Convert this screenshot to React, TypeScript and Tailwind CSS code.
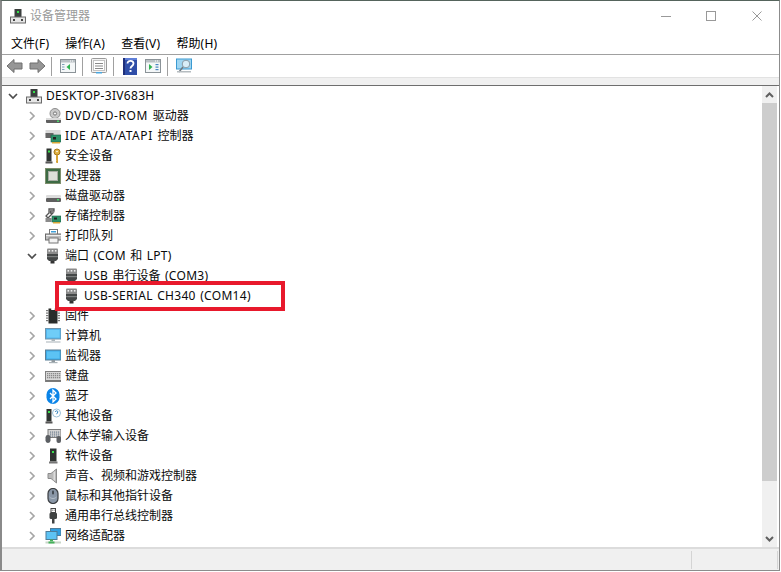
import React from "react";

type IC = React.ReactNode;
const S = ({ children, size = 16 }: { children: IC; size?: number }) => (
  <svg width={size} height={size} viewBox="0 0 16 16" className="shrink-0 block">{children}</svg>
);

const Tower = () => (
  <S>
    <rect x="4.5" y="1" width="7" height="8" fill="#3b3f3e" />
    <rect x="7" y="3" width="2" height="2" fill="#35e04a" />
    <rect x="0.5" y="9" width="15" height="6" fill="#e6e6e6" stroke="#6b6b6b" />
    <rect x="3" y="11" width="2" height="2" fill="#444" />
    <rect x="11" y="11" width="2" height="2" fill="#444" />
  </S>
);
const Dvd = () => (
  <S>
    <circle cx="10" cy="5.5" r="5" fill="#c9c9c9" stroke="#8d8d8d" />
    <circle cx="10" cy="5.5" r="1.6" fill="#f5f5f5" stroke="#777" />
    <rect x="1" y="10" width="15" height="5" rx="1" fill="#5f5f5f" />
    <rect x="1" y="10" width="15" height="2" fill="#dcdcdc" />
    <rect x="12" y="12.5" width="2" height="1.5" fill="#4bd66b" />
  </S>
);
const Ide = () => (
  <S>
    <rect x="0.5" y="2" width="15" height="6" fill="#d9d9d9" />
    <rect x="0.5" y="5" width="8" height="5" fill="#666" />
    <rect x="6" y="7" width="10" height="7" fill="#2b9268" stroke="#1d5f47" strokeWidth="0.6" />
    <rect x="8" y="9" width="3" height="2.5" fill="#222" />
    <rect x="7" y="14" width="8" height="1.5" fill="#d6a83a" />
  </S>
);
const Sec = () => (
  <S>
    <rect x="1.5" y="0.5" width="5" height="13" fill="#2f3331" />
    <rect x="0.5" y="13.5" width="7" height="2" fill="#555" />
    <rect x="3" y="2.5" width="2" height="2" fill="#3ae04f" />
    <circle cx="12" cy="4" r="3" fill="#e0b040" stroke="#a5791e" />
    <circle cx="12" cy="3.5" r="0.8" fill="#fff" />
    <path d="M11 7h2v8h-1.5l-.5-1v-1l.5-.5-.5-.5z" fill="#d6a232" />
  </S>
);
const Cpu = () => (
  <S>
    <rect x="0" y="0" width="16" height="16" fill="#7d8f6c" />
    <rect x="1" y="1" width="14" height="14" fill="#3d6b45" />
    <rect x="3.5" y="3.5" width="9" height="9" fill="#dcdfd9" stroke="#a7aca3" />
  </S>
);
const Disk = () => (
  <S>
    <rect x="1" y="7" width="15" height="3" rx="1" fill="#dcdcdc" />
    <rect x="1" y="10" width="15" height="4" rx="1" fill="#5f5f5f" />
    <rect x="12" y="11" width="2" height="1.5" fill="#4bd66b" />
  </S>
);
const Storage = () => (
  <S>
    <path d="M4 1h5v2H5.5v2H8L3 10 1 8l3-3z" fill="none" stroke="#555" strokeWidth="1.3" />
    <rect x="0.5" y="10" width="6" height="4" fill="#8a8a8a" />
    <rect x="7" y="8" width="9" height="6" fill="#2b9268" stroke="#1d5f47" strokeWidth="0.6" />
    <rect x="9" y="9.5" width="3" height="2" fill="#222" />
    <rect x="8" y="14" width="7" height="1.5" fill="#d6a83a" />
  </S>
);
const Printer = () => (
  <S>
    <rect x="4.5" y="1.5" width="8" height="5" fill="#fff" stroke="#777" />
    <rect x="6" y="3" width="5" height="1.5" fill="#3f9fd8" />
    <rect x="0.5" y="6" width="16" height="6" fill="#bdbdbd" stroke="#6a6a6a" />
    <rect x="4" y="10" width="9" height="5" fill="#f4f4f4" stroke="#777" />
    <rect x="1" y="7" width="15" height="1" fill="#eee" />
  </S>
);
const Port = () => (
  <S>
    <rect x="2" y="0.5" width="11" height="6" rx="1" fill="#8b8b8b" />
    <rect x="3.5" y="2" width="1.6" height="1.6" fill="#eee" />
    <rect x="6.7" y="2" width="1.6" height="1.6" fill="#eee" />
    <rect x="9.900" y="2" width="1.6" height="1.6" fill="#eee" />
    <path d="M2 6h11v5l-2 2H4l-2-2z" fill="#454848" />
    <rect x="2" y="8" width="11" height="1.200" fill="#7d8080" />
    <rect x="5.500" y="13" width="4" height="2.500" fill="#333" />
  </S>
);
const Chip = () => (
  <S>
    <rect x="3.5" y="0.5" width="9" height="15" fill="#2a2c2b" />
    <rect x="6" y="0" width="4" height="2" fill="#fff" rx="1" />
    {[2, 4.5, 7, 9.5, 12].map((y) => (
      <g key={y}>
        <rect x="1" y={y} width="2.5" height="1.2" fill="#777" />
        <rect x="12.5" y={y} width="2.5" height="1.2" fill="#777" />
      </g>
    ))}
  </S>
);
const Pc = () => (
  <S>
    <rect x="0.5" y="0.5" width="15.5" height="10.5" fill="#52b6ee" stroke="#6f95ad" />
    <rect x="2" y="2" width="12.5" height="7.5" fill="#6fcdf8" />
    <rect x="6.5" y="11" width="3.5" height="2" fill="#aab4ba" />
    <rect x="1" y="13" width="14.5" height="2" fill="#d3d8db" />
  </S>
);
const Monitor = () => (
  <S>
    <rect x="0.5" y="2" width="15.5" height="10" fill="#3dabe8" stroke="#5b7f96" />
    <rect x="2" y="3.5" width="12.5" height="7" fill="#5cc3f4" />
    <rect x="6.5" y="12" width="3.5" height="2" fill="#8e989e" />
    <rect x="4" y="14" width="8.5" height="1.2" fill="#a9b2b7" />
  </S>
);
const Keyboard = () => (
  <S>
    <rect x="0.5" y="3.5" width="16" height="10" fill="#d8d8d8" stroke="#808080" />
    {[5, 7, 9].map((y) => (
      <g key={y}>
        {[2, 4, 6, 8, 10, 12, 14].map((x) => (
          <rect key={x} x={x} y={y} width="1.3" height="1.3" fill="#8a8a8a" />
        ))}
      </g>
    ))}
    <rect x="1" y="12" width="15" height="1.5" fill="#777" />
  </S>
);
const Bt = () => (
  <S>
    <rect x="1.5" y="0" width="13" height="16" rx="6.5" fill="#0a84e8" />
    <path d="M5 5l6 6-3 3V2l3 3-6 6" fill="none" stroke="#fff" strokeWidth="1.3" />
  </S>
);
const Other = () => (
  <S>
    <rect x="1.5" y="1" width="5" height="12.5" fill="#2f3331" />
    <rect x="0.5" y="13.5" width="7" height="2" fill="#555" />
    <rect x="3" y="3" width="2" height="2" fill="#3ae04f" />
    <circle cx="11.5" cy="5" r="4" fill="#fff" stroke="#9cc0d8" />
    <path d="M10.2 4c.3-1.600 2.800-1.400 2.700 0 0 1-1.300 1-1.300 2.200" fill="none" stroke="#2b7fbd" strokeWidth="1" />
  </S>
);
const Hid = () => (
  <S>
    <rect x="3" y="1.500" width="13" height="8" fill="#d5d5d5" stroke="#7b7b7b" />
    {[3.500, 5.500, 7.500].map((y) => (
      <g key={y}>
        {[5, 7, 9, 11, 13].map((x) => (
          <rect key={x} x={x} y={y} width="1.200" height="1.200" fill="#6f7f90" />
        ))}
      </g>
    ))}
    <rect x="0.500" y="7" width="5" height="8" rx="2.400" fill="#5c5f63" />
    <rect x="11.500" y="8" width="4.500" height="7" rx="2" fill="#5c5f63" />
  </S>
);
const Soft = () => (
  <S>
    <rect x="5" y="0.500" width="6.500" height="13" fill="#2f3331" />
    <rect x="4" y="13.500" width="8.500" height="2" fill="#777" />
    <rect x="7" y="3" width="2" height="2" fill="#3ae04f" />
  </S>
);
const Sound = () => (
  <S>
    <path d="M3 5.500h3L11.500 1v14L6 10.500H3z" fill="#b9b9b9" stroke="#8b8b8b" />
    <rect x="8.500" y="3.500" width="1.500" height="9" fill="#dcdcdc" />
  </S>
);
const Mouse = () => (
  <S>
    <rect x="3" y="0.500" width="10" height="15" rx="5" fill="#8a97a7" stroke="#3a3d40" strokeWidth="1.200" />
    <rect x="7" y="2.500" width="2" height="4" rx="1" fill="#444b52" />
    <path d="M4.500 9c2 2 5 2 7 0" stroke="#b7c2cc" fill="none" />
  </S>
);
const Usb = () => (
  <S>
    <rect x="6" y="0.500" width="4.500" height="4" fill="#fff" stroke="#444" />
    <rect x="7.200" y="1.700" width="0.900" height="0.900" fill="#444" />
    <rect x="8.700" y="1.700" width="0.900" height="0.900" fill="#444" />
    <rect x="4.500" y="4.500" width="7.500" height="6.500" rx="1.500" fill="#3f4242" />
    <rect x="7" y="11" width="2.500" height="4.500" fill="#3f4242" />
  </S>
);
const Net = () => (
  <S>
    <rect x="5.500" y="0.500" width="10.500" height="7" fill="#2f9ee0" stroke="#4d7c99" />
    <rect x="1" y="3.500" width="11" height="8" fill="#5cc3f4" stroke="#4d7c99" />
    <rect x="5" y="11.500" width="3" height="2" fill="#45b15a" />
    <rect x="0.500" y="13.500" width="15.500" height="2" fill="#c8d6c8" />
    <rect x="3.500" y="13.500" width="6" height="2" fill="#45b15a" />
  </S>
);

const Chevron = ({ open }: { open?: boolean }) => (
  <svg width="14" height="14" viewBox="0 0 14 14" className="shrink-0 block">
    {open ? (
      <path d="M3 5l4 4 4-4" fill="none" stroke="#4d4d4d" strokeWidth="1.700" />
    ) : (
      <path d="M5 3l4 4-4 4" fill="none" stroke="#a6a6a6" strokeWidth="1.700" />
    )}
  </svg>
);

// Latin runs are slightly wider in the reference; CJK runs keep a 12px pitch.
const Label = ({ text, wide }: { text: string; wide?: boolean }) => (
  <>
    {text.split(/([\u4e00-\u9fff、]+)/).map((part, i) =>
      part === "" ? null : i % 2 === 1 ? (
        <span key={i}>{part}</span>
      ) : (
        <span key={i} className={wide ? "tracking-[0.6px] [word-spacing:1px]" : "tracking-[0.3px] [word-spacing:1px]"}>{part}</span>
      )
    )}
  </>
);

const Row = ({ level, chev, icon, label }: { level: 0 | 1 | 2; chev?: "open" | "closed"; icon: IC; label: string }) => {
  const pad = level === 0 ? "pl-[4px]" : level === 1 ? "pl-[23px]" : "pl-[42px]";
  const wide = label.startsWith("DVD") || label.startsWith("IDE");
  return (
    <div className={`flex items-center h-5 whitespace-pre ${pad}`}>
      <div className="w-[14px] mr-[6px] shrink-0">{chev && <Chevron open={chev === "open"} />}</div>
      {icon}
      <span className="ml-[4px]"><Label text={label} wide={wide} /></span>
    </div>
  );
};

const Sep = () => <div className="w-px h-[19px] bg-[#a0a0a0]" />;

const WinGlyph = ({ kind }: { kind: "left" | "right" | "list" }) => (
  <S>
    <rect x="0.500" y="1.500" width="15" height="13" fill="#f4f7f8" stroke="#8b9398" />
    <rect x="1" y="2" width="14" height="2.500" fill="#b9c0c4" />
    <rect x="12" y="2.500" width="1" height="1" fill="#fff" />
    <rect x="10" y="2.500" width="1" height="1" fill="#fff" />
    {kind === "left" && (
      <>
        <path d="M10 6v6L6.500 9z" fill="#2fb351" />
        <rect x="2" y="6" width="2.500" height="1" fill="#7fa0b8" />
        <rect x="2" y="8.500" width="2.500" height="1" fill="#7fa0b8" />
        <rect x="2" y="11" width="2.500" height="1" fill="#7fa0b8" />
      </>
    )}
    {kind === "right" && (
      <>
        <path d="M4 6v6l3.500-3z" fill="#2fb351" />
        <rect x="10.500" y="6" width="3" height="1.200" fill="#4a86c0" />
        <rect x="10.500" y="8.500" width="3" height="1.200" fill="#4a86c0" />
        <rect x="10.500" y="11" width="3" height="1.200" fill="#4a86c0" />
      </>
    )}
  </S>
);

const ToolArrow = ({ flip }: { flip?: boolean }) => (
  <svg width="17" height="16" viewBox="0 0 17 16" className="block shrink-0">
    <path
      d={flip ? "M1 5h8V1.500L16 8l-7 6.500V11H1z" : "M16 5H8V1.500L1 8l7 6.500V11h8z"}
      fill="#969696"
      stroke="#6f6f6f"
    />
  </svg>
);

const tree: { icon: IC; label: string }[] = [
  { icon: <Dvd />, label: "DVD/CD-ROM 驱动器" },
  { icon: <Ide />, label: "IDE ATA/ATAPI 控制器" },
  { icon: <Sec />, label: "安全设备" },
  { icon: <Cpu />, label: "处理器" },
  { icon: <Disk />, label: "磁盘驱动器" },
  { icon: <Storage />, label: "存储控制器" },
  { icon: <Printer />, label: "打印队列" },
];
const tree2: { icon: IC; label: string }[] = [
  { icon: <Chip />, label: "固件" },
  { icon: <Pc />, label: "计算机" },
  { icon: <Monitor />, label: "监视器" },
  { icon: <Keyboard />, label: "键盘" },
  { icon: <Bt />, label: "蓝牙" },
  { icon: <Other />, label: "其他设备" },
  { icon: <Hid />, label: "人体学输入设备" },
  { icon: <Soft />, label: "软件设备" },
  { icon: <Sound />, label: "声音、视频和游戏控制器" },
  { icon: <Mouse />, label: "鼠标和其他指针设备" },
  { icon: <Usb />, label: "通用串行总线控制器" },
  { icon: <Net />, label: "网络适配器" },
];

export default function App() {
  return (
    <div className="relative w-[781px] h-[572px] bg-white overflow-hidden text-[12px] leading-4 text-[#0a0a0a] font-['Noto_Sans','Noto_Sans_CJK_SC',sans-serif]">
      <div className="w-[780px] h-[571px] flex flex-col border-t border-l-2 border-r border-b border-t-[#55645c] border-l-[#8a8a8a] border-r-[#8c8c8c] border-b-[#8c8c8c]">
        {/* title bar */}
        <div className="h-[33px] pb-[3px] flex items-center pl-[8px] shrink-0">
          <Tower />
          <span className="ml-[4px] text-[#9a9a9a]">设备管理器</span>
          <div className="ml-auto flex items-center">
            <div className="w-[10px] h-px bg-[#999] mr-[35px]" />
            <div className="w-[10px] h-[10px] border border-[#999] mr-[36px]" />
            <svg width="10" height="10" viewBox="0 0 10 10" className="block mr-[17px]">
              <path d="M0.500 0.500l9 9M9.500 0.500l-9 9" stroke="#999" strokeWidth="1" />
            </svg>
          </div>
        </div>
        {/* menu */}
        <div className="h-[21px] shrink-0 flex items-center pl-[9px] gap-[16px] text-black border-b border-[#a0a0a0] pb-px">
          <span><Label text="文件(F)" /></span>
          <span><Label text="操作(A)" /></span>
          <span><Label text="查看(V)" /></span>
          <span><Label text="帮助(H)" /></span>
        </div>
        {/* toolbar */}
        <div className="h-[23px] shrink-0 flex items-center pl-[4px] border-b border-[#e2e2e2]">
          <ToolArrow />
          <div className="w-[6px]" />
          <ToolArrow flip />
          <div className="w-[5px]" />
          <Sep />
          <div className="w-[8px]" />
          <WinGlyph kind="left" />
          <div className="w-[6px]" />
          <Sep />
          <div className="w-[8px]" />
          <S>
            <rect x="0.500" y="0.500" width="15" height="14" rx="1" fill="#f3f3f3" stroke="#9a9a9a" />
            <rect x="2.500" y="2.500" width="11" height="10" fill="#fff" stroke="#c3c3c3" />
            <rect x="4" y="5" width="8" height="1" fill="#8a8a8a" />
            <rect x="4" y="7.500" width="8" height="1" fill="#8a8a8a" />
            <rect x="4" y="10" width="8" height="1" fill="#8a8a8a" />
            <rect x="5" y="14" width="6" height="1.500" fill="#4aa7e0" />
          </S>
          <div className="w-[6px]" />
          <Sep />
          <div className="w-[9px]" />
          <svg width="14" height="17" viewBox="0 0 14 17" className="block shrink-0">
            <rect x="0" y="0" width="14" height="17" fill="#2f4ea8" />
            <rect x="0" y="0" width="2" height="17" fill="#1f2f7a" />
            <rect x="2" y="0" width="12" height="2" fill="#5f7fd8" />
            <path d="M4.500 5.500C4.500 1.800 10.500 2 10.500 5.500c0 2.500-3 2.500-3 5" fill="none" stroke="#fff" strokeWidth="1.800" />
            <rect x="6.500" y="12" width="2" height="2" fill="#fff" />
          </svg>
          <div className="w-[8px]" />
          <WinGlyph kind="right" />
          <div className="w-[6px]" />
          <Sep />
          <div className="w-[8px]" />
          <S>
            <rect x="0.500" y="1" width="15" height="10" fill="#9fd6f2" stroke="#3b9ad2" />
            <circle cx="10" cy="6" r="3.800" fill="#d9eef8" stroke="#8a9aa5" />
            <path d="M7 9l-4 5" stroke="#6f7980" strokeWidth="1.500" />
            <rect x="1" y="13" width="14" height="1.500" fill="#b5bcc0" />
          </S>
        </div>
        {/* strip */}
        <div className="h-[8px] shrink-0 bg-[#f0f0f0] border-b border-[#6e6e6e]" />
        {/* content */}
        <div className="flex-1 min-h-0 flex overflow-hidden">
          <div className="flex-1 min-w-0 overflow-hidden">
            <Row level={0} chev="open" icon={<Tower />} label="DESKTOP-3IV683H" />
            {tree.map((t) => (
              <Row key={t.label} level={1} chev="closed" icon={t.icon} label={t.label} />
            ))}
            <Row level={1} chev="open" icon={<Port />} label="端口 (COM 和 LPT)" />
            <Row level={2} icon={<Port />} label="USB 串行设备 (COM3)" />
            <Row level={2} icon={<Port />} label="USB-SERIAL CH340 (COM14)" />
            {tree2.map((t) => (
              <Row key={t.label} level={1} chev="closed" icon={t.icon} label={t.label} />
            ))}
          </div>
          {/* scrollbar */}
          <div className="w-[15px] shrink-0 mr-[2px] bg-[#f0f0f0] flex flex-col">
            <div className="h-[17px] flex items-center justify-center">
              <svg width="9" height="6" viewBox="0 0 9 6" className="block">
                <path d="M1 5l3.500-3.500L8 5" fill="none" stroke="#606060" strokeWidth="2" />
              </svg>
            </div>
            <div className="h-[378px] bg-[#cdcdcd]" />
            <div className="flex-1" />
            <div className="h-[17px] flex items-center justify-center">
              <svg width="9" height="6" viewBox="0 0 9 6" className="block">
                <path d="M1 1l3.500 3.500L8 1" fill="none" stroke="#606060" strokeWidth="2" />
              </svg>
            </div>
          </div>
        </div>
        {/* status */}
        <div className="h-[23px] shrink-0 flex bg-[#f0f0f0] border-t-2 border-[#dcdcdc] pt-[2px]">
          <div className="w-[690px] border-r border-[#d4d4d4] h-[18px]" />
          <div className="flex-1 border-r border-[#d4d4d4] mr-px h-[18px]" />
        </div>
      </div>
      {/* annotation */}
      <div className="absolute left-[55px] top-[281px] w-[230px] h-[30px] border-4 border-[#e8192c]" />
    </div>
  );
}
